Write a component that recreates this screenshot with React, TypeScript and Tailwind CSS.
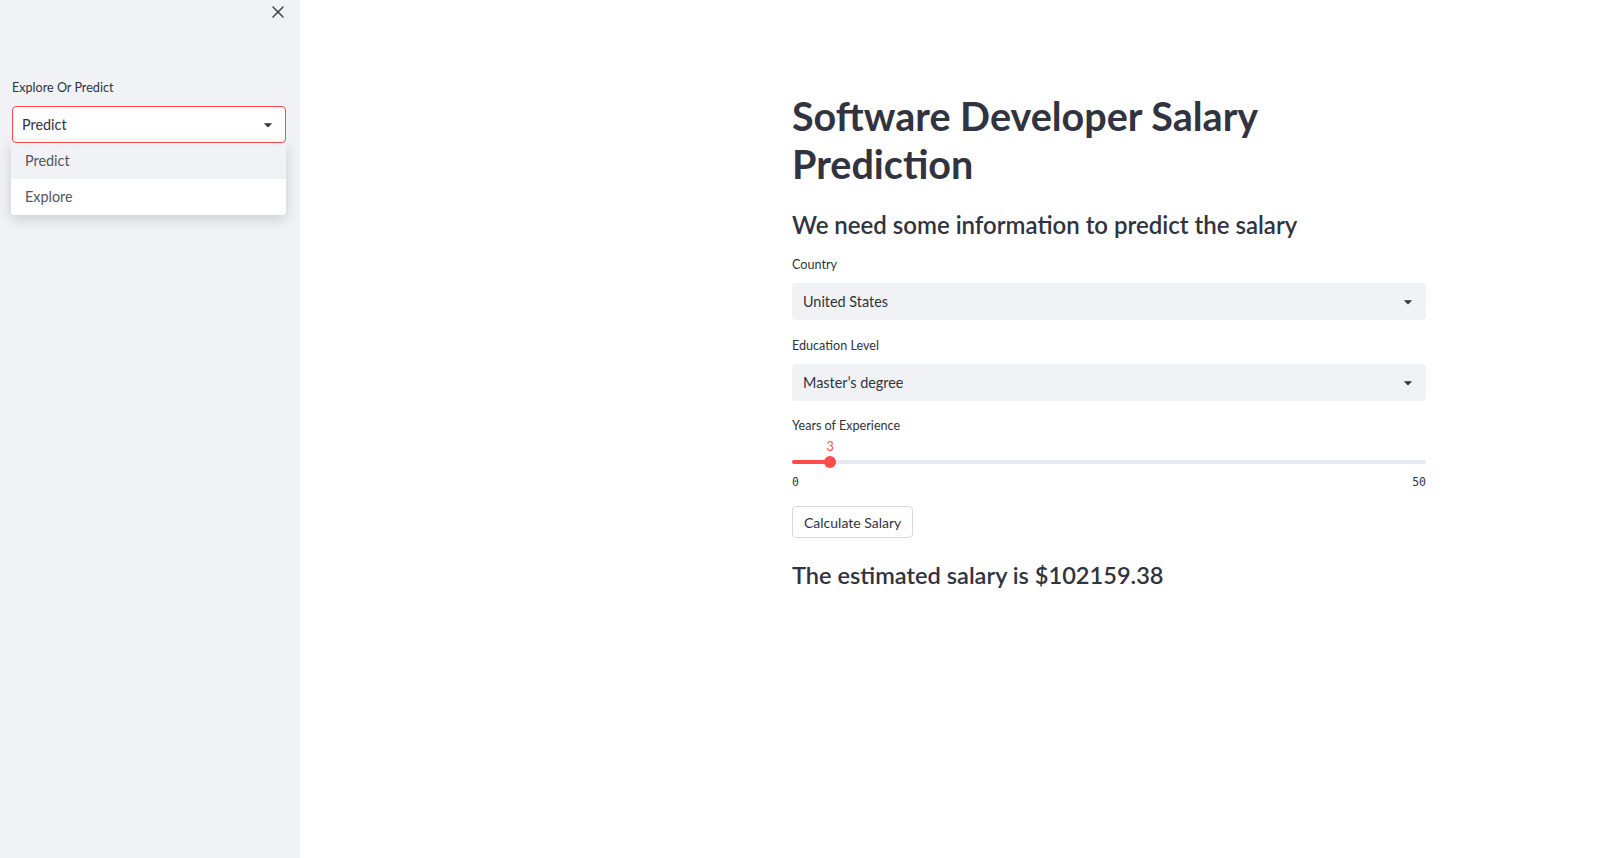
import { X } from 'lucide-react';

const font = { fontFamily: 'Lato, "Noto Sans", sans-serif' };

function Caret() {
  return (
    <svg width="20" height="20" viewBox="0 0 24 24" className="text-[#31333f]">
      <path d="M7 10l5 5 5-5z" fill="currentColor" />
    </svg>
  );
}

function SelectBox({ label, value }: { label: string; value: string }) {
  return (
    <div className="mb-[16px]">
      <div className="text-[12.6px] leading-[20px] text-[#31333f] mb-[8px]">{label}</div>
      <div className="h-[37px] rounded-[4px] bg-[#f0f2f6] flex items-center justify-between pl-[11px] pr-[8px]">
        <span className="text-[14.4px] text-[#31333f]">{value}</span>
        <Caret />
      </div>
    </div>
  );
}

export default function App() {
  const years = 3;
  const max = 50;
  const pct = (years / max) * 100;

  return (
    <div className="flex h-screen w-full bg-white" style={font}>
      {/* sidebar */}
      <aside className="relative w-[300px] shrink-0 bg-[#f0f2f6] px-[12px] pt-[78px]">
        <button className="absolute right-[12px] top-[2px] text-[#3d3f4a]">
          <X size={20} strokeWidth={1.75} />
        </button>
        <div className="text-[12.6px] leading-[20px] text-[#31333f] mb-[8px]">Explore Or Predict</div>
        <div className="relative w-[274px]">
          <div className="h-[37px] rounded-[4px] border border-[#ff4b4b] bg-white flex items-center justify-between pl-[9px] pr-[7px]">
            <span className="text-[14.4px] text-[#31333f]">Predict</span>
            <Caret />
          </div>
          <ul className="absolute left-[-1px] top-[37px] w-[275px] rounded-b-[4px] bg-white shadow-[0_4px_14px_rgba(0,0,0,0.16)] overflow-hidden z-10">
            <li className="h-[36px] flex items-center pl-[14px] bg-[#f0f2f6] text-[14.4px] text-[#55575f]">Predict</li>
            <li className="h-[36px] flex items-center pl-[14px] text-[14.4px] text-[#55575f]">Explore</li>
          </ul>
        </div>
      </aside>

      {/* main */}
      <main className="flex-1 pl-[492px] pt-[92px]">
        <div className="w-[634px]">
          <h1 className="text-[39.5px] font-bold leading-[48px] text-[#31333f] w-[520px]">
            Software Developer Salary Prediction
          </h1>
          <h3 className="mt-[22px] text-[24px] font-semibold leading-[30px] text-[#31333f]">
            We need some information to predict the salary
          </h3>

          <div className="mt-[15px]">
            <SelectBox label="Country" value="United States" />
            <SelectBox label="Education Level" value="Master’s degree" />

            <div className="text-[12.6px] leading-[20px] text-[#31333f] -mt-[1px]">Years of Experience</div>
            <div className="relative h-[16px] mt-[3px]">
              <span
                className="absolute top-0 -translate-x-1/2 text-[12.6px] leading-[16px] text-[#ff4b4b]"
                style={{ left: `${pct}%` }}
              >
                {years}
              </span>
            </div>
            <div className="relative h-[14px] flex items-center">
              <div className="w-full h-[4px] rounded-full bg-[#e6e9ef]" />
              <div className="absolute left-0 h-[4px] rounded-full bg-[#ff4b4b]" style={{ width: `${pct}%` }} />
              <div
                className="absolute w-[12px] h-[12px] rounded-full bg-[#ff4b4b] -translate-x-1/2"
                style={{ left: `${pct}%` }}
              />
            </div>
            <div
              className="flex justify-between text-[11.5px] leading-[16px] text-[#31333f] mt-[5px]"
              style={{ fontFamily: '"DejaVu Sans Mono", monospace' }}
            >
              <span>0</span>
              <span>50</span>
            </div>

            <button className="mt-[16px] h-[32px] px-[11px] rounded-[4px] border border-[#d6d8de] bg-white text-[14px] text-[#31333f]">
              Calculate Salary
            </button>

            <h3 className="mt-[22px] text-[23.6px] font-semibold leading-[30px] text-[#31333f]">
              The estimated salary is $102159.38
            </h3>
          </div>
        </div>
      </main>
    </div>
  );
}
